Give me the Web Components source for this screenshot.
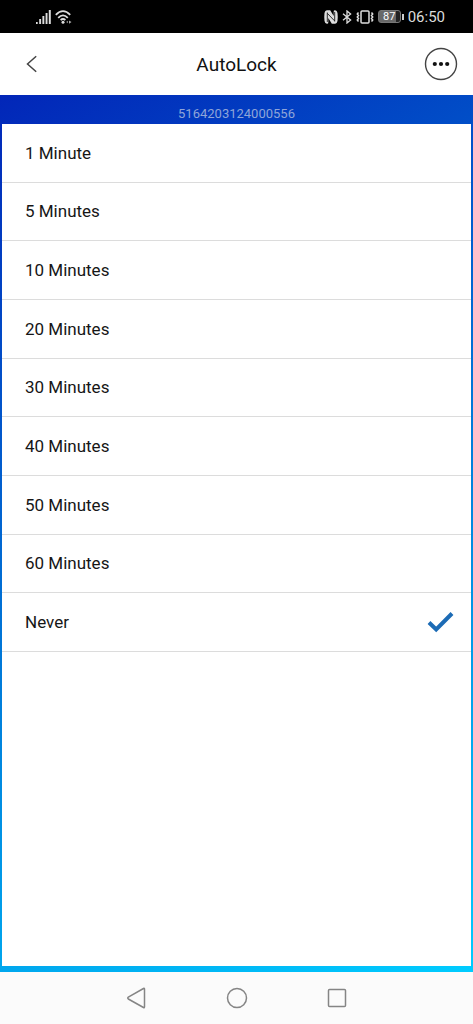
<!DOCTYPE html>
<html lang="en">
<head>
<meta charset="utf-8">
<meta name="viewport" content="width=device-width, initial-scale=1">
<title>AutoLock</title>
<style>
html, body { margin: 0; height: 100%; }
body { font-family: Roboto, "Noto Sans", sans-serif; color: #161616; background: #fff; }
</style>
</head>
<body>
<app-screen>
  <status-bar slot="status" time="06:50" battery="87"></status-bar>
  <title-bar slot="title">AutoLock</title-bar>
  <device-panel serial="5164203124000556">
    <option-list value="Never"></option-list>
  </device-panel>
  <nav-bar slot="nav"></nav-bar>
</app-screen>

<script>
function define(name, html, setup) {
  customElements.define(name, class extends HTMLElement {
    connectedCallback() {
      if (this.shadowRoot) return;
      const root = this.attachShadow({ mode: 'open' });
      const template = document.createElement('template');
      template.innerHTML = html;
      root.append(template.content.cloneNode(true));
      if (setup) setup(this, root);
    }
  });
}

define('app-screen', `
<style>
:host { display: flex; flex-direction: column; min-height: 100vh; }
main { flex: 1; display: flex; flex-direction: column; }
</style>
<slot name="status"></slot>
<slot name="title"></slot>
<main><slot></slot></main>
<slot name="nav"></slot>`);

define('status-bar', `
<style>
:host { display: flex; align-items: center; justify-content: space-between; box-sizing: border-box;
  height: 33px; padding: 0 28px 0 36px; background: #000; color: #dcdcdc; }
div { display: flex; align-items: center; gap: 4px; }
svg { display: block; }
.battery { display: flex; align-items: center; gap: 1px; }
.cell { box-sizing: border-box; width: 23px; height: 13px; border: 1px solid #777; border-radius: 3px;
  background: linear-gradient(90deg, #686868 80%, #222 80%); color: #fff; font-size: 11px; line-height: 11px; text-align: center; }
.tip { width: 2px; height: 6px; background: #ccc; }
time { font-size: 15px; line-height: 20px; }
</style>
<div>
  <svg width="15" height="14" viewBox="0 0 15 14" fill="#ddd"><path d="M0 12h1.700v2H0zM3.200 9h1.900v5h-1.900zM6.400 6h1.900v8h-1.900zM9.600 3h1.900v11h-1.900zM12.800 0h2v14h-2z"/></svg>
  <svg width="17" height="14" viewBox="0 0 17 14" fill="none" stroke="#ddd" stroke-width="1.8"><path d="M.8 4.800Q8-2.600 15.200 4.800M3.200 7.800Q8 3 12.800 7.800M5.600 10Q8 8 10.400 10"/><circle cx="8" cy="12.300" r="1.500" fill="#ddd" stroke="none"/><path d="M14 10.500l2.500 1.600-2.500 1.600zM12.800 10.800v2.400l-1.600-1.200z" fill="#aaa" stroke="none"/></svg>
</div>
<div>
  <svg width="14" height="14" viewBox="0 0 14 14"><path d="M3 .3H6.200L9.700 6V1.500Q9.600.3 11 .3Q13 .2 13.500 3Q14 7 13.500 11Q13 13.800 11 13.700H7.800L4.300 8V12.500Q4.400 13.700 3 13.700Q1 13.800.5 11Q0 7 .5 3Q1 .2 3 .3Z" fill="#ddd"/><path d="M3.300 2.500V12M3.500 3.500L10.500 10.800M10.700 2V11.500" fill="none" stroke="#000" stroke-width=".8"/></svg>
  <svg width="10" height="14" viewBox="0 0 10 14" fill="none" stroke="#ddd" stroke-width="1.3"><path d="M1 3.800l7.600 6.200L5 13V1l3.600 3L1 10.200"/></svg>
  <svg width="18" height="14" viewBox="0 0 18 14" fill="none" stroke="#ddd" stroke-width="1.5"><rect x="5" y="1" width="8" height="12" rx="1"/><path d="M2.500 2.500l-1.200 1.500 1.200 1.500-1.200 1.500 1.200 1.500-1.200 1.500 1.200 1.500M15.500 2.500l1.200 1.500-1.200 1.500 1.200 1.500-1.200 1.500 1.200 1.500-1.200 1.500"/></svg>
  <span class="battery"><span class="cell"></span><span class="tip"></span></span>
  <time></time>
</div>`, (host, root) => {
  root.querySelector('time').textContent = host.getAttribute('time');
  root.querySelector('.cell').textContent = host.getAttribute('battery');
});

define('title-bar', `
<style>
:host { display: block; }
header { display: grid; grid-template-columns: 48px 1fr 48px; align-items: center;
  height: 62px; padding: 0 8px; background: #fff; }
h1 { margin: 0; font-size: 19px; line-height: 24px; padding-top: 2px; font-weight: 400; text-align: center; color: #111; }
button { display: grid; place-items: center; height: 48px; padding: 0; border: 0; background: none; }
svg { display: block; }
</style>
<header>
  <button type="button" aria-label="Back"><svg width="12" height="18" viewBox="0 0 12 18" fill="none" stroke="#444" stroke-width="1.5"><path d="M10.200 1.200L1.500 9l8.700 7.800"/></svg></button>
  <h1><slot></slot></h1>
  <button type="button" aria-label="More"><svg width="34" height="34" viewBox="0 0 34 34"><circle cx="17" cy="17" r="15.500" fill="none" stroke="#444" stroke-width="1.400"/><g fill="#111"><circle cx="10.800" cy="17" r="2.100"/><circle cx="17" cy="17" r="2.100"/><circle cx="23.200" cy="17" r="2.100"/></g></svg></button>
</header>`);

define('device-panel', `
<style>
:host { flex: 1; display: flex; flex-direction: column; padding: 0 2px 6px;
  background: linear-gradient(152deg, #0226b8, #0078d8 50%, #00ccff); }
p { box-sizing: border-box; height: 29px; margin: 0; padding-top: 9px; font-size: 13px; line-height: 20px;
  text-align: center; color: #8fa5d8; }
section { flex: 1; background: #fff; }
</style>
<p></p>
<section><slot></slot></section>`, (host, root) => {
  root.querySelector('p').textContent = host.getAttribute('serial');
});

define('option-list', `
<style>
:host { display: block; }
.options { display: grid; grid-auto-rows: 1fr; min-height: 528px; }
label { display: flex; align-items: center;
  padding: 0 17px 0 23px; border-bottom: 1px solid #dcdcdc; font-size: 17px; line-height: 24px; }
span { flex: 1; }
input { appearance: none; width: 0; height: 0; margin: 0; }
svg { display: none; }
input:checked + svg { display: block; }
</style>
<div class="options" role="radiogroup" aria-label="AutoLock"></div>`, (host, root) => {
  const names = ['1 Minute', '5 Minutes', '10 Minutes', '20 Minutes', '30 Minutes',
    '40 Minutes', '50 Minutes', '60 Minutes', 'Never'];
  root.querySelector('.options').innerHTML = names.map(name => `
    <label><span>${name}</span><input type="radio" name="delay" value="${name}"${name === host.getAttribute('value') ? ' checked' : ''}><svg width="27" height="22" viewBox="0 0 27 22" fill="none" stroke="#1c6bb5" stroke-width="4"><path d="M2 11.500L9.200 18.500L25 2.500"/></svg></label>`).join('');
});

define('nav-bar', `
<style>
:host { display: block; }
nav { display: flex; justify-content: center; align-items: center; gap: 52px; height: 52px; background: #fbfbfb; }
button { display: grid; place-items: center; width: 48px; height: 48px; padding: 0; border: 0; background: none; }
svg { display: block; fill: none; stroke: #858585; stroke-width: 1.5; stroke-linejoin: round; }
</style>
<nav aria-label="System">
  <button type="button" aria-label="Back"><svg width="22" height="22" viewBox="0 0 22 22"><path d="M17.500 1.500Q18.500 1 18.500 2.300V19.700Q18.500 21 17.500 20.500L2.300 12Q1.200 11 2.300 10.200Z"/></svg></button>
  <button type="button" aria-label="Home"><svg width="22" height="22" viewBox="0 0 22 22"><circle cx="11" cy="11" r="9.500"/></svg></button>
  <button type="button" aria-label="Recents"><svg width="22" height="22" viewBox="0 0 22 22"><rect x="2.500" y="2.500" width="17" height="17" rx="1"/></svg></button>
</nav>`);
</script>
</body>
</html>
